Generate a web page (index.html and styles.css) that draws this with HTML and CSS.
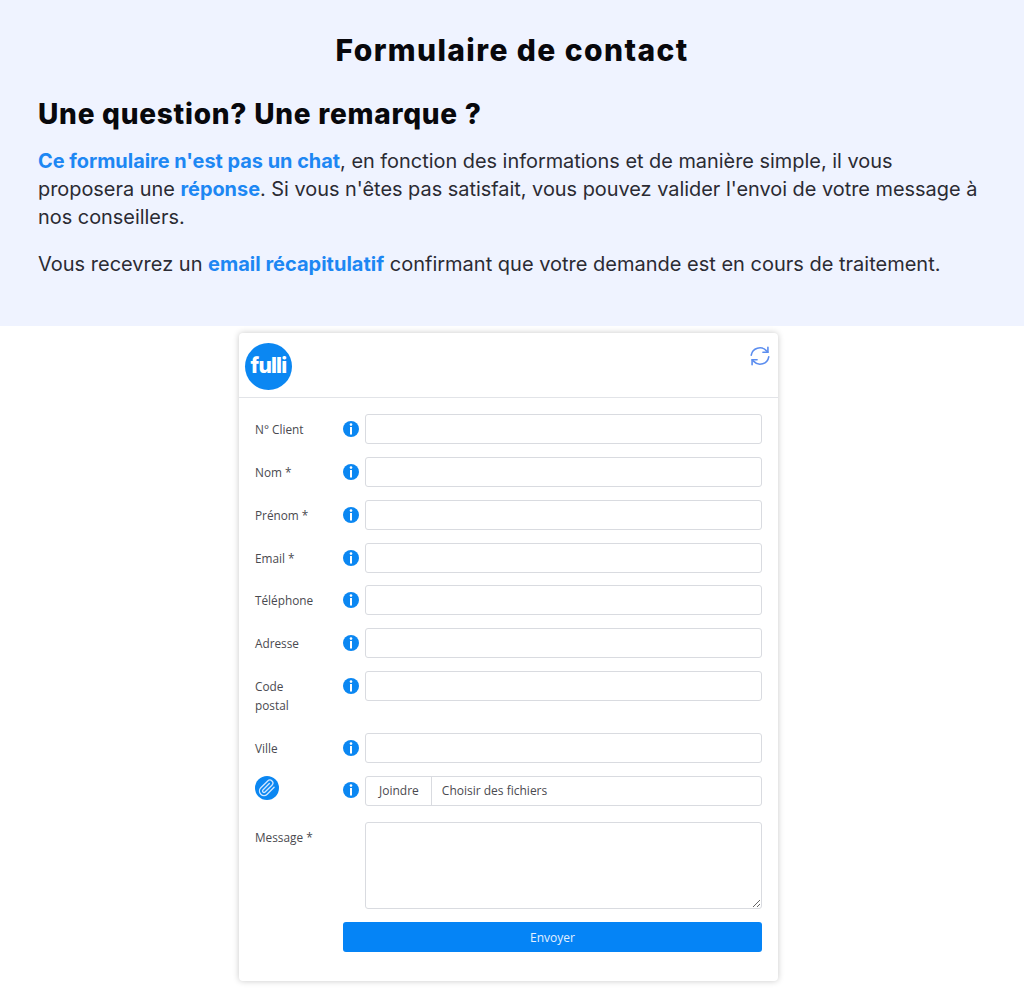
FILE: index.html
```html
<!DOCTYPE html>
<html lang="fr">
<head>
  <meta charset="utf-8" />
  <title>Formulaire de contact</title>
  <link rel="stylesheet" href="styles.css">
</head>
<body>

  <section class="hero">
    <h1>Formulaire de contact</h1>
    <h2>Une question? Une remarque ?</h2>
    <p><b>Ce formulaire n'est pas un chat</b>, en fonction des informations et de manière simple, il vous proposera une <b>réponse</b>. Si vous n'êtes pas satisfait, vous pouvez valider l'envoi de votre message à nos conseillers.</p>
    <p class="note">Vous recevrez un <b>email récapitulatif</b> confirmant que votre demande est en cours de traitement.</p>
  </section>

  <div class="card">
    <div class="card-head">
      <div class="logo">fulli</div>
      <svg class="refresh" viewBox="0 0 24 24" width="20" height="20" fill="none" stroke="#5b8def" stroke-width="1.900" stroke-linecap="round" stroke-linejoin="round">
        <polyline points="21.500 1.500 21.500 7.500 15.500 7.500"></polyline>
        <polyline points="2.500 22.500 2.500 16.500 8.500 16.500"></polyline>
        <path d="M1.500 11A10.500 10.500 0 0 1 19.500 5.500L21.500 7.500M2.500 16.500L4.500 18.500A10.500 10.500 0 0 0 22.500 13"></path>
      </svg>
    </div>

    <form class="form">
      <div class="row">
        <label class="lbl">N° Client</label>
        <svg class="info" viewBox="0 0 16 16"><circle cx="8" cy="8" r="8"></circle><circle class="dot" cx="8" cy="3.600" r="1.300"></circle><rect class="dot" x="7" y="6" width="2" height="7.500"></rect></svg>
        <input class="field" type="text" />
      </div>
      <div class="row">
        <label class="lbl">Nom *</label>
        <svg class="info" viewBox="0 0 16 16"><circle cx="8" cy="8" r="8"></circle><circle class="dot" cx="8" cy="3.600" r="1.300"></circle><rect class="dot" x="7" y="6" width="2" height="7.500"></rect></svg>
        <input class="field" type="text" />
      </div>
      <div class="row">
        <label class="lbl">Prénom *</label>
        <svg class="info" viewBox="0 0 16 16"><circle cx="8" cy="8" r="8"></circle><circle class="dot" cx="8" cy="3.600" r="1.300"></circle><rect class="dot" x="7" y="6" width="2" height="7.500"></rect></svg>
        <input class="field" type="text" />
      </div>
      <div class="row">
        <label class="lbl">Email *</label>
        <svg class="info" viewBox="0 0 16 16"><circle cx="8" cy="8" r="8"></circle><circle class="dot" cx="8" cy="3.600" r="1.300"></circle><rect class="dot" x="7" y="6" width="2" height="7.500"></rect></svg>
        <input class="field" type="text" />
      </div>
      <div class="row">
        <label class="lbl">Téléphone</label>
        <svg class="info" viewBox="0 0 16 16"><circle cx="8" cy="8" r="8"></circle><circle class="dot" cx="8" cy="3.600" r="1.300"></circle><rect class="dot" x="7" y="6" width="2" height="7.500"></rect></svg>
        <input class="field" type="text" />
      </div>
      <div class="row">
        <label class="lbl">Adresse</label>
        <svg class="info" viewBox="0 0 16 16"><circle cx="8" cy="8" r="8"></circle><circle class="dot" cx="8" cy="3.600" r="1.300"></circle><rect class="dot" x="7" y="6" width="2" height="7.500"></rect></svg>
        <input class="field" type="text" />
      </div>
      <div class="row">
        <label class="lbl lbl-wrap">Code postal</label>
        <svg class="info" viewBox="0 0 16 16"><circle cx="8" cy="8" r="8"></circle><circle class="dot" cx="8" cy="3.600" r="1.300"></circle><rect class="dot" x="7" y="6" width="2" height="7.500"></rect></svg>
        <input class="field" type="text" />
      </div>
      <div class="row">
        <label class="lbl">Ville</label>
        <svg class="info" viewBox="0 0 16 16"><circle cx="8" cy="8" r="8"></circle><circle class="dot" cx="8" cy="3.600" r="1.300"></circle><rect class="dot" x="7" y="6" width="2" height="7.500"></rect></svg>
        <input class="field" type="text" />
      </div>
      <div class="row row-file">
        <div class="clip">
          <svg viewBox="0 0 24 24" width="18" height="18" fill="none" stroke="#cfe6ff" stroke-width="1.800" stroke-linecap="round" stroke-linejoin="round">
            <path d="M21.440 11.050l-9.190 9.190a6 6 0 0 1-8.490-8.490l9.190-9.190a4 4 0 0 1 5.660 5.660l-9.200 9.190a2 2 0 0 1-2.830-2.830l8.490-8.480"></path>
          </svg>
        </div>
        <svg class="info" viewBox="0 0 16 16"><circle cx="8" cy="8" r="8"></circle><circle class="dot" cx="8" cy="3.600" r="1.300"></circle><rect class="dot" x="7" y="6" width="2" height="7.500"></rect></svg>
        <div class="file">
          <span class="file-btn">Joindre</span>
          <span class="file-name">Choisir des fichiers</span>
        </div>
      </div>
      <div class="row row-msg">
        <label class="lbl">Message *</label>
        <span></span>
        <textarea class="field area"></textarea>
      </div>
      <div class="row">
        <span></span>
        <button class="send" type="button">Envoyer</button>
      </div>
    </form>
  </div>

</body>
</html>
```

FILE: styles.css
```css
body {
  margin: 0;
  padding-bottom: 15px;
  background-color: #fff;
  font-family: "Inter", Arial, sans-serif;
  color: #2b2b33;
}

/* --- bandeau du haut --- */
.hero {
  background-color: #eff3ff;
  height: 326px;
  box-sizing: border-box;
  padding: 30px 38px 0;
}
.hero h1 {
  margin: 0 0 26px;
  font-size: 30px;
  line-height: 40px;
  font-weight: 800;
  letter-spacing: 1.400px;
  text-align: center;
  color: #08080c;
}
.hero h2 {
  margin: 0 0 15px;
  font-size: 28px;
  line-height: 36px;
  font-weight: 800;
  letter-spacing: 0.750px;
  color: #08080c;
}
.hero p {
  margin: 0 0 19px;
  font-size: 19.900px;
  line-height: 28px;
}
.hero .note { font-size: 20px; }
.hero b { color: #1d87f3; font-weight: 700; }

/* --- carte formulaire --- */
.card {
  width: 539px;
  height: 648px;
  margin: 7px 0 0 239px;
  box-sizing: border-box;
  background: #fff;
  border-radius: 4px;
  box-shadow: 0 0 6px rgba(0, 0, 0, 0.22);
  font-family: "Open Sans", Arial, sans-serif;
  font-size: 12px;
  color: #4a4a4f;
}
.card-head {
  height: 65px;
  box-sizing: border-box;
  border-bottom: 1px solid #e2e4e8;
  padding: 10px 8px 0 6px;
  display: flex;
  justify-content: space-between;
  align-items: flex-start;
}
.logo {
  width: 47px;
  height: 47px;
  border-radius: 50%;
  background: #0b87f2;
  color: #fff;
  font-family: "Inter", sans-serif;
  font-weight: 800;
  font-size: 21px;
  letter-spacing: -0.800px;
  line-height: 46px;
  text-align: center;
}
.refresh { margin: 3px 0 0; }

.form {
  padding: 16.200px 16px 0;
  display: flex;
  flex-direction: column;
  gap: 12.800px;
}
.row {
  display: grid;
  grid-template-columns: 88px 22px 397px;
  align-items: start;
}
.lbl {
  padding: 6px 10px 5px 0;
  font-size: 11.800px;
  line-height: 19px;
}
.lbl-wrap { padding-right: 40px; }
.info {
  width: 16px;
  height: 16px;
  margin-top: 7px;
  fill: #0b87f2;
}
.info .dot { fill: #fff; }
.field {
  display: block;
  width: 397px;
  height: 30px;
  box-sizing: border-box;
  border: 1px solid #d9dbe0;
  border-radius: 3px;
  background: #fff;
  margin: 0;
  padding: 0 10px;
}
.area { height: 87px; }
.row-msg { margin-top: 3.400px; }
.clip {
  width: 24px;
  height: 24px;
  border-radius: 50%;
  background: #0b87f2;
  display: flex;
  align-items: center;
  justify-content: center;
}
.row-file .info { margin-top: 6px; }
.file {
  display: flex;
  height: 30px;
  box-sizing: border-box;
  border: 1px solid #d9dbe0;
  border-radius: 3px;
  line-height: 28px;
}
.file-btn {
  padding: 0 12px 0 13px;
  border-right: 1px solid #d9dbe0;
}
.file-name { padding-left: 10px; }
.send {
  grid-column: 2 / 4;
  height: 30px;
  padding: 2px 0 0;
  border: none;
  border-radius: 3px;
  background: #0584f6;
  color: #e4f1ff;
  font-family: "Open Sans", Arial, sans-serif;
  font-size: 12px;
  cursor: pointer;
}
```
